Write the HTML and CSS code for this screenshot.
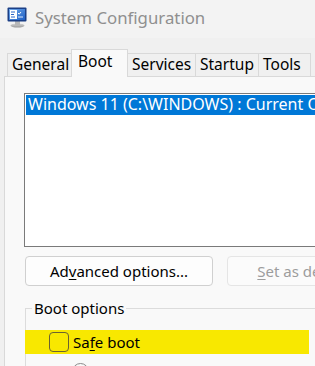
FILE: index.html
```html
<!DOCTYPE html>
<html>
<head>
<meta charset="utf-8">
<link rel="stylesheet" href="styles.css">
</head>
<body>
<div class="window">
  <div class="titlebar">
    <svg class="app-icon" width="22" height="22" viewBox="0 0 22 22">
      <defs>
        <linearGradient id="scr" x1="0" y1="0" x2="1" y2="1">
          <stop offset="0" stop-color="#6fa8ea"/>
          <stop offset="1" stop-color="#1d5fc4"/>
        </linearGradient>
        <linearGradient id="stand" x1="0" y1="0" x2="0" y2="1">
          <stop offset="0" stop-color="#d8d8d8"/>
          <stop offset="1" stop-color="#9a9a9a"/>
        </linearGradient>
      </defs>
      <ellipse cx="11.5" cy="19.5" rx="7" ry="2" fill="url(#stand)"/>
      <rect x="9" y="15" width="5" height="4" fill="#b8b8b8"/>
      <rect x="1.5" y="1.5" width="19" height="14" rx="1" fill="#1b3f86"/>
      <rect x="3" y="3" width="16" height="11" fill="url(#scr)"/>
      <rect x="4" y="4" width="7" height="9" fill="#ffffff"/>
      <path d="M5 6h4M5 8.5h3M5 11h4" stroke="#2b66c8" stroke-width="1"/>
      <path d="M12 7l1.2 1.2L15 6" stroke="#ffffff" stroke-width="1" fill="none"/>
      <path d="M12 11h5" stroke="#dfeaff" stroke-width="1"/>
    </svg>
    <span class="title">System Configuration</span>
  </div>
  <div class="client">
    <div class="tabs">
      <div class="tab t-general">General</div>
      <div class="tab t-boot active">Boot</div>
      <div class="tab t-services">Services</div>
      <div class="tab t-startup">Startup</div>
      <div class="tab t-tools">Tools</div>
    </div>
    <div class="panel">
      <div class="listbox">
        <div class="item selected">Windows 11 (C:\WINDOWS) : Current OS; Default OS</div>
      </div>
      <div class="buttons">
        <button class="btn btn-adv">Ad<u>v</u>anced options...</button>
        <button class="btn btn-default disabled"><u>S</u>et as default</button>
      </div>
      <div class="group">
        <div class="legend">Boot options</div>
        <div class="row highlight">
          <span class="checkbox"></span>
          <span class="label">Sa<u>f</u>e boot</span>
        </div>
        <div class="row sub">
          <span class="radio"></span>
          <span class="label">Mi<u>n</u>imal</span>
        </div>
      </div>
    </div>
  </div>
</div>
</body>
</html>
```

FILE: styles.css
```css
html, body {
  margin: 0;
  padding: 0;
  width: 315px;
  height: 366px;
  overflow: hidden;
}
body {
  font-family: "Noto Sans", "Open Sans", sans-serif;
  font-size: 15px;
  color: #000;
  background: #f0f0f0;
}
.window {
  width: 315px;
  height: 366px;
  overflow: hidden;
}
.titlebar {
  height: 38px;
  background: #f3f3f3;
  display: flex;
  align-items: center;
  padding-left: 6px;
  gap: 7px;
}
.app-icon {
  flex: none;
  margin-top: -4px;
}
.title {
  font-size: 16.8px;
  color: #8f8f8f;
  margin-top: -4px;
  white-space: nowrap;
}
.client {
  background: #f0f0f0;
  padding-left: 4px;
  height: 328px;
}
.tabs {
  display: flex;
  align-items: flex-end;
  height: 38px;
  padding-left: 3px;
  white-space: nowrap;
}
.tab {
  box-sizing: border-box;
  height: 23px;
  border: 1px solid #d9d9d9;
  border-bottom: none;
  margin-right: -1px;
  background: #f0f0f0;
  padding-left: 4px;
  line-height: 20px;
  font-size: 15.5px;
  flex: none;
}
.tab.active {
  height: 28px;
  margin-bottom: -1px;
  background: #f9f9f9;
  position: relative;
  z-index: 1;
  padding-left: 6px;
  line-height: 22px;
}
.t-general { width: 65px; }
.t-boot { width: 57px; }
.t-services { width: 69px; }
.t-startup { width: 64px; }
.t-tools { width: 53px; }
.panel {
  background: #f9f9f9;
  border: 1px solid #d9d9d9;
  border-right: none;
  height: 300px;
  padding: 16px 0 0 19px;
}
.listbox {
  box-sizing: border-box;
  width: 320px;
  height: 154px;
  border: 1px solid #7a7a7a;
  background: #ffffff;
  padding: 1px;
}
.item {
  height: 20px;
  line-height: 19px;
  padding-left: 2px;
  font-size: 16px;
  white-space: nowrap;
}
.item.selected {
  background: #0078d7;
  color: #ffffff;
}
.buttons {
  display: flex;
  gap: 14px;
  margin-top: 9px;
  margin-left: 1px;
  width: 330px;
}
.btn {
  box-sizing: border-box;
  height: 30px;
  font-family: inherit;
  font-size: 15px;
  background: #fdfdfd;
  border: 1px solid #d0d0d0;
  border-radius: 4px;
  color: #000;
  padding: 0;
  flex: none;
}
.btn-adv { width: 188px; }
.btn-default { width: 156px; }
.btn.disabled {
  color: #9d9d9d;
  background: #fbfbfb;
  border-color: #e5e5e5;
}
.group {
  position: relative;
  margin-top: 22px;
  margin-left: 1px;
  width: 320px;
  height: 80px;
  border-top: 1px solid #dcdcdc;
  border-left: 1px solid #dcdcdc;
}
.legend {
  position: absolute;
  top: -11px;
  left: 6px;
  padding: 0 2px;
  background: #f9f9f9;
  line-height: 20px;
}
.row {
  display: flex;
  align-items: center;
  white-space: nowrap;
}
.row.highlight {
  margin-top: 21px;
  margin-left: -1px;
  width: 284px;
  height: 24px;
  background: #f8e800;
}
.checkbox {
  box-sizing: border-box;
  width: 20px;
  height: 20px;
  border: 1px solid #6b6230;
  border-radius: 4px;
  margin-left: 24px;
  margin-right: 4px;
  flex: none;
}
.row.sub {
  margin-top: 7px;
  padding-left: 46px;
  height: 20px;
}
.radio {
  box-sizing: border-box;
  width: 17px;
  height: 17px;
  border: 1px solid #8a8a8a;
  border-radius: 50%;
  background: #fafafa;
  margin-right: 10px;
  flex: none;
}
u { text-underline-offset: 2px; }
```
